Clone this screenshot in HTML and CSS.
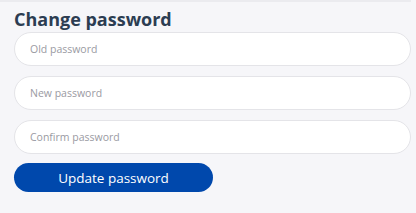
FILE: index.html
```html
<!DOCTYPE html>
<html lang="en">
<head>
  <meta charset="UTF-8" />
  <meta name="viewport" content="width=device-width, initial-scale=1.0"/>
  <title>Change password</title>
  <link rel="stylesheet" href="styles.css">
</head>
<body>
  <div class="topline"></div>
  <form class="password-form">
    <h2>Change password</h2>
    <input type="password" class="field" placeholder="Old password">
    <input type="password" class="field" placeholder="New password">
    <input type="password" class="field" placeholder="Confirm password">
    <button type="button" class="update-btn">Update password</button>
  </form>
</body>
</html>
```

FILE: styles.css
```css
body {
  margin: 0;
  background: #f6f6f9;
  font-family: "Open Sans", Arial, sans-serif;
}

.topline {
  width: 411px;
  height: 2px;
  background: #ebebef;
}

.password-form {
  display: flex;
  flex-direction: column;
  align-items: flex-start;
  gap: 10px;
  padding: 6px 5px 0 14px;
}

h2 {
  margin: -1px 0 -9px;
  font-size: 18px;
  font-weight: 700;
  color: #2c3d52;
  line-height: 24px;
}

.field {
  box-sizing: border-box;
  width: 397px;
  height: 34px;
  padding: 0 15px;
  border: 1px solid #e4e4e8;
  border-radius: 17px;
  background: #fff;
  font-family: inherit;
  font-size: 10.5px;
  outline: none;
}

.field::placeholder {
  color: #9a9aa2;
}

.update-btn {
  margin-top: -1px;
  width: 199px;
  height: 29px;
  border: none;
  border-radius: 15px;
  background: #0048ac;
  color: white;
  font-family: inherit;
  font-size: 13.5px;
  font-weight: 500;
  cursor: pointer;
}
```
